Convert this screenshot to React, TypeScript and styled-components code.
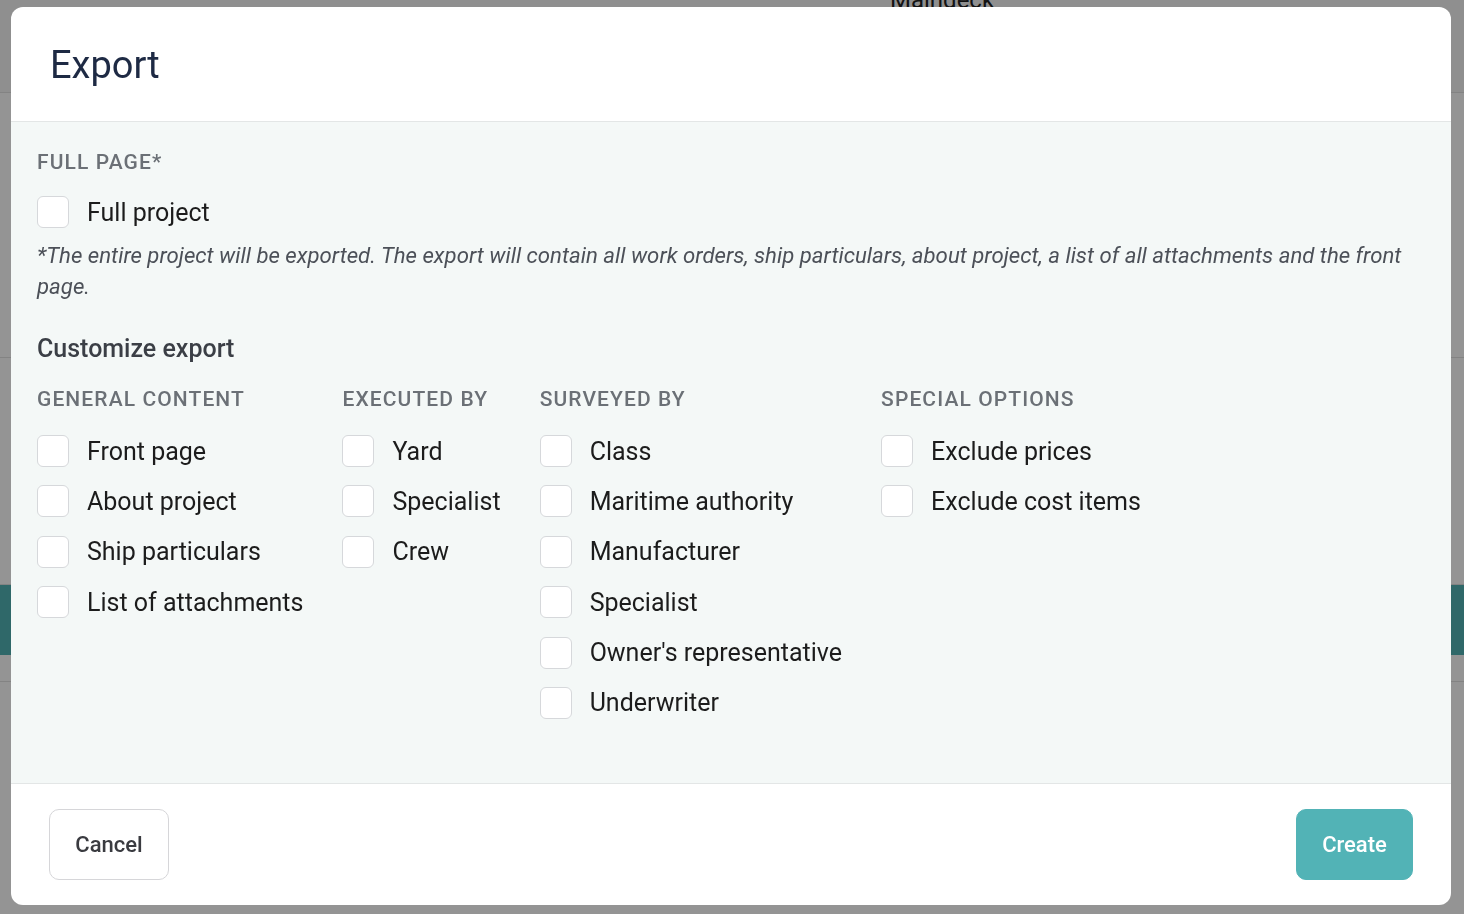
import React from "react";
import styled, { createGlobalStyle } from "styled-components";

const GlobalStyle = createGlobalStyle`
  html, body {
    margin: 0;
    padding: 0;
    height: 100%;
    overflow: hidden;
    font-family: Roboto, "Noto Sans", Arial, sans-serif;
  }
`;

const teal = "#52b3b6";

// page that sits behind the dimmed overlay
const PageBehind = styled.div`
  height: 100vh;
  background: #ffffff;
  display: flex;
  flex-direction: column;
`;

const PageTop = styled.div`
  height: 104px;
  flex-shrink: 0;
  background: #f7f7f7;
  border-bottom: 1px solid #e2e2e2;
  display: flex;
  align-items: flex-start;
  padding-left: 890px;
  font-size: 24px;
  color: #222;
  line-height: 1;
  margin-top: -12px;
`;

const PageSection = styled.div<{ $h: number }>`
  height: ${(p) => p.$h}px;
  flex-shrink: 0;
  border-bottom: 1px solid #e2e2e2;
`;

const PageBand = styled.div`
  height: 70px;
  flex-shrink: 0;
  background: ${teal};
`;

const Overlay = styled.div`
  position: fixed;
  inset: 0;
  background: rgba(0, 0, 0, 0.42);
  padding: 7px 0 0 11px;
  box-sizing: border-box;
`;

const Modal = styled.div`
  width: 1440px;
  height: 898px;
  background: #ffffff;
  border-radius: 12px;
  overflow: hidden;
  display: flex;
  flex-direction: column;
`;

const Header = styled.div`
  height: 114px;
  flex-shrink: 0;
  display: flex;
  align-items: center;
  padding: 0 39px;
  border-bottom: 1px solid #e3e6e6;
`;

const Title = styled.h2`
  margin: 0;
  font-size: 38px;
  font-weight: 400;
  color: #1e2a44;
  padding-top: 2px;
`;

const Body = styled.div`
  flex: 1;
  background: #f4f8f7;
  padding: 28px 26px 0;
  display: flex;
  flex-direction: column;
`;

const Caps = styled.div`
  font-size: 21px;
  line-height: 24px;
  font-weight: 500;
  letter-spacing: 1.1px;
  text-transform: uppercase;
  color: #6b7076;
  white-space: nowrap;
`;

const Row = styled.label`
  display: flex;
  align-items: center;
  gap: 18px;
  height: 32px;
  cursor: pointer;
`;

const Box = styled.span`
  width: 30px;
  height: 30px;
  flex-shrink: 0;
  border: 1px solid #d6d8db;
  border-radius: 6px;
  background: #ffffff;
`;

const Label = styled.span`
  font-size: 25px;
  color: #1c1c1c;
  white-space: nowrap;
`;

const Note = styled.p`
  margin: 12px 0 0;
  font-size: 22.2px;
  line-height: 31px;
  font-style: italic;
  color: #4c5058;
`;

const Subtitle = styled.h3`
  margin: 33px 0 0;
  font-size: 25px;
  line-height: 28px;
  font-weight: 500;
  color: #3b3f46;
`;

const Columns = styled.div`
  display: flex;
  gap: 39px;
  margin-top: 24px;
`;

const Column = styled.div`
  display: flex;
  flex-direction: column;
`;

const List = styled.div`
  display: flex;
  flex-direction: column;
  gap: 18.4px;
  margin-top: 24px;
`;

const FullRow = styled.div`
  margin-top: 22px;
`;

const Footer = styled.div`
  height: 121px;
  flex-shrink: 0;
  border-top: 1px solid #e3e6e6;
  display: flex;
  align-items: center;
  justify-content: space-between;
  padding: 0 38px;
`;

const Button = styled.button<{ $primary?: boolean }>`
  height: 71px;
  width: ${(p) => (p.$primary ? 117 : 120)}px;
  padding: 0;
  border-radius: 10px;
  font-family: Roboto, Arial, sans-serif;
  font-size: 22px;
  font-weight: 500;
  cursor: pointer;
  border: 1px solid ${(p) => (p.$primary ? teal : "#d6d6d9")};
  background: ${(p) => (p.$primary ? teal : "#ffffff")};
  color: ${(p) => (p.$primary ? "#ffffff" : "#3a3b40")};
`;

const Check = ({ label }: { label: string }) => (
  <Row>
    <Box />
    <Label>{label}</Label>
  </Row>
);

const groups = [
  {
    title: "General content",
    items: ["Front page", "About project", "Ship particulars", "List of attachments"],
  },
  { title: "Executed by", items: ["Yard", "Specialist", "Crew"] },
  {
    title: "Surveyed by",
    items: [
      "Class",
      "Maritime authority",
      "Manufacturer",
      "Specialist",
      "Owner's representative",
      "Underwriter",
    ],
  },
  { title: "Special options", items: ["Exclude prices", "Exclude cost items"] },
];

export default function App() {
  return (
    <>
      <GlobalStyle />
      <PageBehind>
        <PageTop>Maindeck</PageTop>
        <PageSection $h={264} />
        <PageSection $h={226} />
        <PageBand />
        <PageSection $h={26} />
      </PageBehind>
      <Overlay>
        <Modal>
          <Header>
            <Title>Export</Title>
          </Header>
          <Body>
            <Caps>Full page*</Caps>
            <FullRow>
              <Check label="Full project" />
            </FullRow>
            <Note>
              *The entire project will be exported. The export will contain all work orders, ship
              particulars, about project, a list of all attachments and the front page.
            </Note>
            <Subtitle>Customize export</Subtitle>
            <Columns>
              {groups.map((g) => (
                <Column key={g.title}>
                  <Caps>{g.title}</Caps>
                  <List>
                    {g.items.map((it) => (
                      <Check key={it} label={it} />
                    ))}
                  </List>
                </Column>
              ))}
            </Columns>
          </Body>
          <Footer>
            <Button>Cancel</Button>
            <Button $primary>Create</Button>
          </Footer>
        </Modal>
      </Overlay>
    </>
  );
}
